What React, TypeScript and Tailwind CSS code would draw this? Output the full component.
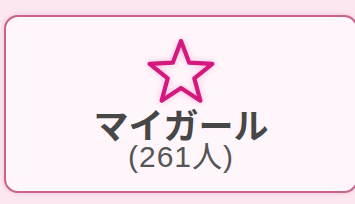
export default function App() {
  return (
    <div className="w-[355px] h-[204px] overflow-hidden bg-[#fce6f0] pt-[15px] pl-[4px]">
      <div className="w-[354px] h-[178px] rounded-[14px] border-2 border-[#c9628c] bg-[#fff6fb] flex flex-col items-center pt-[22px] shadow-[0_0_4px_rgba(220,120,160,0.35)]">
        <svg width="70" height="66" viewBox="0 0 70 66" className="drop-shadow-[0_0_3px_rgba(230,60,150,0.35)]">
          <polygon
            points="35,2 43.23,23.67 66.38,24.8 48.31,39.33 54.4,61.7 35,49 15.6,61.7 21.69,39.33 3.62,24.8 26.77,23.67"
            fill="none"
            stroke="#d4187e"
            strokeWidth="4.2"
            strokeLinejoin="round"
          />
        </svg>
        <div
          className="mt-[2px] text-[35px] leading-[34px] font-bold text-[#474747]"
          style={{ fontFamily: '"Noto Sans CJK JP", sans-serif' }}
        >
          マイガール
        </div>
        <div
          className="mt-[1px] text-[30px] leading-[30px] tracking-[1px] text-[#555555]"
          style={{ fontFamily: '"Liberation Sans", "Noto Sans CJK JP", sans-serif' }}
        >
          (261人)
        </div>
      </div>
    </div>
  )
}
